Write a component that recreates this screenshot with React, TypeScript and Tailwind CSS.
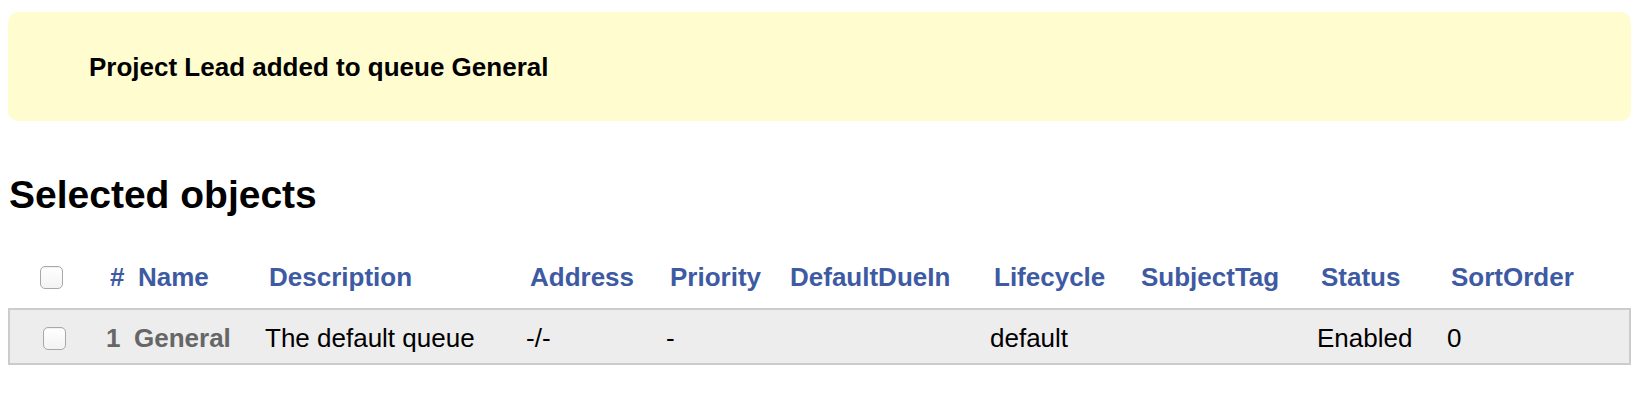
import React from 'react';

const font = { fontFamily: '"Liberation Sans", Arial, Helvetica, sans-serif' };

function Checkbox() {
  return (
    <span className="block w-[23px] h-[23px] rounded-[5px] border border-[#a8a8a8] bg-gradient-to-b from-white to-[#f3f3f3] shadow-[inset_0_1px_1px_rgba(0,0,0,0.06)]" />
  );
}

const columns = [
  { label: '#', value: '1', w: 'w-[28px]', muted: true },
  { label: 'Name', value: 'General', w: 'w-[131px]', muted: true },
  { label: 'Description', value: 'The default queue', w: 'w-[261px]' },
  { label: 'Address', value: '-/-', w: 'w-[140px]' },
  { label: 'Priority', value: '-', w: 'w-[120px]' },
  { label: 'DefaultDueIn', value: '', w: 'w-[204px]' },
  { label: 'Lifecycle', value: 'default', w: 'w-[147px]' },
  { label: 'SubjectTag', value: '', w: 'w-[180px]' },
  { label: 'Status', value: 'Enabled', w: 'w-[130px]' },
  { label: 'SortOrder', value: '0', w: 'w-[150px]' },
];

export default function App() {
  return (
    <div className="min-h-screen bg-white pl-2 pr-[13px] pt-[12px] text-[26px] text-black" style={font}>
      {/* Results message */}
      <div className="h-[109px] rounded-[10px] bg-[#fffdd0] flex items-center pl-[81px]">
        <span className="font-bold leading-[30px]">Project Lead added to queue General</span>
      </div>

      <h2 className="mt-[51px] text-[39px] leading-[45px] font-bold pl-px">Selected objects</h2>

      {/* Collection table */}
      <div className="mt-[45px]">
        <div className="flex items-center h-[30px] border-x-2 border-transparent">
          <div className="w-[96px] pl-[30px]">
            <Checkbox />
          </div>
          <div className="flex pl-[4px]">
            {columns.map((c) => (
              <div key={c.label} className={`${c.w} shrink-0 font-bold text-[#3d5aa3] leading-[30px] whitespace-nowrap`}>
                {c.label}
              </div>
            ))}
          </div>
        </div>

        <div className="mt-[16px] h-[57px] border-2 border-[#cccccc] bg-[#ededed] flex items-center pt-[3px]">
          <div className="w-[96px] pl-[33px]">
            <Checkbox />
          </div>
          <div className="flex">
            {columns.map((c) => (
              <div
                key={c.label}
                className={`${c.w} shrink-0 leading-[30px] whitespace-nowrap ${c.muted ? 'font-bold text-[#666666]' : ''}`}
              >
                {c.value}
              </div>
            ))}
          </div>
        </div>
      </div>
    </div>
  );
}
